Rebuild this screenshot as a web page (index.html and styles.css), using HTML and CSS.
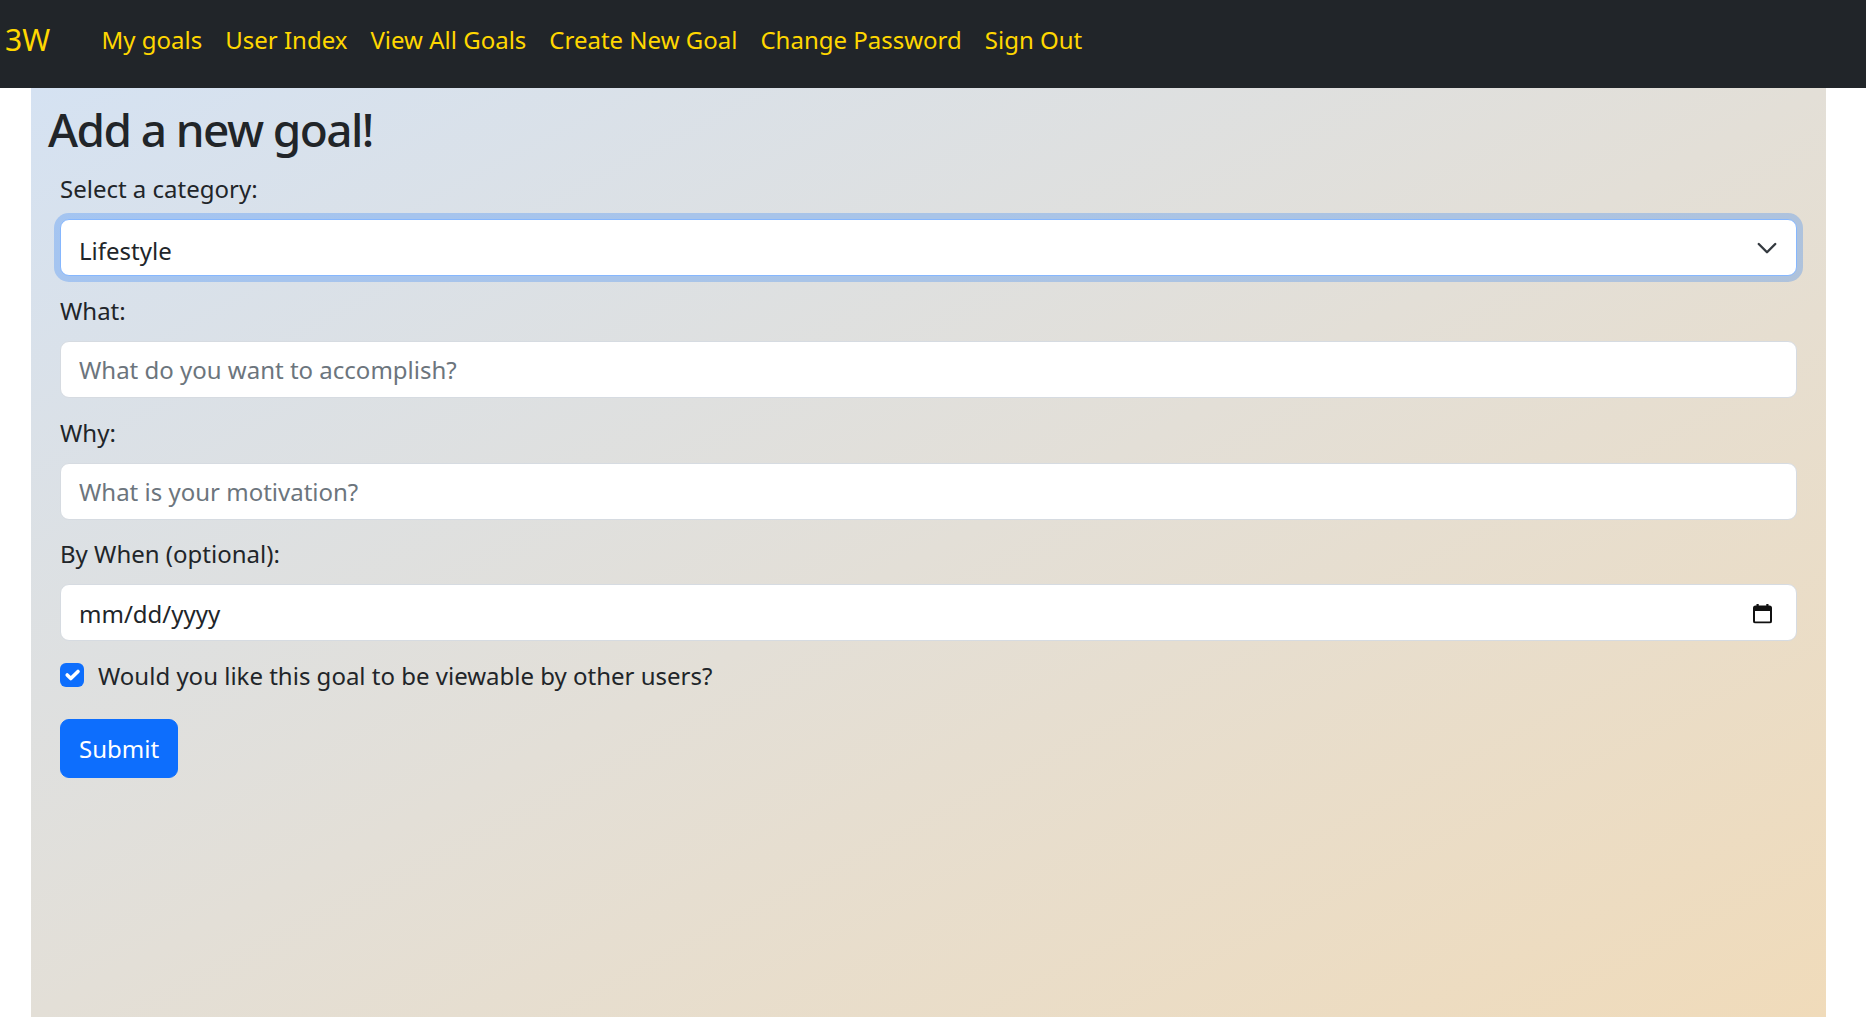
FILE: index.html
```html
<!DOCTYPE html>
<html lang="en">
<head>
<meta charset="utf-8">
<title>Add a new goal</title>
<link rel="stylesheet" href="styles.css">
</head>
<body>
<nav class="navbar">
  <a class="brand" href="#">3W</a>
  <ul class="nav-links">
    <li><a class="nav-link" href="#">My goals</a></li>
    <li><a class="nav-link" href="#">User Index</a></li>
    <li><a class="nav-link" href="#">View All Goals</a></li>
    <li><a class="nav-link" href="#">Create New Goal</a></li>
    <li><a class="nav-link" href="#">Change Password</a></li>
    <li><a class="nav-link" href="#">Sign Out</a></li>
  </ul>
</nav>
<main class="container">
  <h2 class="title">Add a new goal!</h2>
  <form class="goal-form">
    <div class="field field-first">
      <label class="field-label" for="category">Select a category:</label>
      <div class="control-wrap">
        <select id="category" class="control control-select">
          <option>Lifestyle</option>
          <option>Health</option>
          <option>Career</option>
        </select>
        <svg class="chevron" width="24" height="18" viewBox="0 0 16 12" aria-hidden="true"><path d="m2.5 4 5.5 5.5 5.5-5.5" fill="none" stroke="#343a40" stroke-width="1.6" stroke-linecap="round" stroke-linejoin="round"/></svg>
      </div>
    </div>
    <div class="field">
      <label class="field-label" for="what">What:</label>
      <input id="what" class="control" type="text" placeholder="What do you want to accomplish?">
    </div>
    <div class="field">
      <label class="field-label" for="why">Why:</label>
      <input id="why" class="control" type="text" placeholder="What is your motivation?">
    </div>
    <div class="field">
      <label class="field-label" for="when">By When (optional):</label>
      <div class="control-wrap">
        <div id="when" class="control control-date">mm/dd/yyyy</div>
        <svg class="calendar" width="19" height="21" viewBox="0 0 19 21" aria-hidden="true">
          <rect x="1" y="4" width="17" height="16" rx="1.5" fill="none" stroke="#111" stroke-width="2"/>
          <rect x="1" y="4" width="17" height="4.5" fill="#111"/>
          <rect x="3.5" y="1.5" width="2.2" height="3.5" fill="#111"/>
          <rect x="13.3" y="1.5" width="2.2" height="3.5" fill="#111"/>
        </svg>
      </div>
    </div>
    <label class="check-row">
      <span class="check-box"><svg width="24" height="24" viewBox="0 0 20 20" aria-hidden="true"><path d="m6 10 3 3 6-6" fill="none" stroke="#fff" stroke-width="3" stroke-linecap="round" stroke-linejoin="round"/></svg></span>
      <span class="check-label">Would you like this goal to be viewable by other users?</span>
    </label>
    <button class="btn-submit" type="submit">Submit</button>
  </form>
</main>
</body>
</html>
```
FILE: styles.css
```css
* {
  box-sizing: border-box;
}

html, body {
  margin: 0;
  padding: 0;
}

body {
  font-family: "Noto Sans", "Open Sans", sans-serif;
  font-size: 24px;
  line-height: 36px;
  color: #212529;
  background: #ffffff;
}

.navbar {
  display: flex;
  align-items: flex-start;
  height: 88px;
  padding: 22px 0 0 5px;
  background: #212529;
}

.brand {
  font-size: 30px;
  line-height: 36px;
  color: #ffd700;
  text-decoration: none;
  margin-right: 40px;
}

.nav-links {
  display: flex;
  list-style: none;
  margin: 0;
  padding: 0;
}

.nav-link {
  display: block;
  padding: 0 11.5px;
  color: #ffd700;
  text-decoration: none;
  font-size: 24px;
  line-height: 36px;
}

.container {
  margin: 0 40px 0 31px;
  min-height: calc(100vh - 88px);
  padding: 12.5px 17px 40px;
  background: linear-gradient(to bottom right, #d5e2f2 0%, #e3dfd7 50%, #f0dbba 100%);
}

.title {
  margin: 0 0 12.5px;
  font-size: 46px;
  line-height: 57.6px;
  font-weight: 500;
  letter-spacing: -1.6px;
  color: #212529;
}

.goal-form {
  padding: 0 12px;
}

.field {
  margin-bottom: 16.5px;
}

.field-first {
  margin-bottom: 17.5px;
}

.field-label {
  display: block;
  margin-bottom: 12px;
  line-height: 36px;
}

.control-wrap {
  position: relative;
}

.control {
  display: block;
  width: 100%;
  height: 57px;
  padding: 0 18px;
  font-family: inherit;
  font-size: 24px;
  line-height: 36px;
  color: #212529;
  background: #ffffff;
  border: 1.5px solid #d6dbe1;
  border-radius: 9px;
  outline: none;
}

.control::placeholder {
  color: #6c757d;
  opacity: 1;
}

.control-select {
  appearance: none;
  -webkit-appearance: none;
  padding: 7px 60px 0 18px;
  border-color: #86b7fe;
  box-shadow: 0 0 0 6px rgba(13, 110, 253, 0.25);
}

.control-date {
  display: flex;
  align-items: center;
  padding-top: 2px;
}

.chevron {
  position: absolute;
  right: 18px;
  top: 50%;
  transform: translateY(-50%);
  pointer-events: none;
}

.calendar {
  position: absolute;
  right: 25px;
  top: 50%;
  transform: translateY(-50%);
}

.check-row {
  display: flex;
  align-items: flex-start;
  margin-bottom: 25px;
  line-height: 36px;
}

.check-box {
  display: flex;
  align-items: center;
  justify-content: center;
  width: 24px;
  height: 24px;
  margin-top: 5px;
  margin-right: 14px;
  border-radius: 6px;
  background: #0d6efd;
}

.btn-submit {
  display: block;
  height: 59px;
  padding: 2px 18px 0;
  font-family: inherit;
  font-size: 24px;
  line-height: 36px;
  color: #ffffff;
  background: #0d6efd;
  border: 1.5px solid #0d6efd;
  border-radius: 9px;
}
```
